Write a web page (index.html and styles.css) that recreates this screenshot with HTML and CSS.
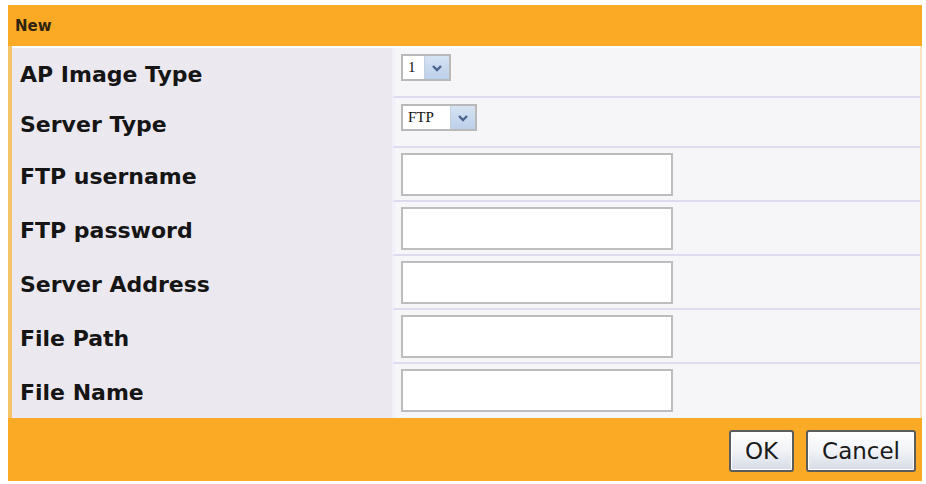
FILE: index.html
```html
<!DOCTYPE html>
<html lang="en">
<head>
    <meta charset="UTF-8">
    <title>New</title>
    <link rel="stylesheet" href="styles.css">
</head>
<body>
    <div class="dialog">
        <div class="dialog-head">New</div>
        <div class="dialog-body">
            <div class="row row-short">
                <div class="label">AP Image Type</div>
                <div class="value">
                    <span class="select select-small">
                        <span class="select-text">1</span>
                        <span class="select-btn">
                            <svg width="12" height="8" viewBox="0 0 12 8"><path d="M2 2 L6 6 L10 2" fill="none" stroke="#4c6590" stroke-width="2.4"/></svg>
                        </span>
                    </span>
                </div>
            </div>
            <div class="row row-short">
                <div class="label">Server Type</div>
                <div class="value">
                    <span class="select select-wide">
                        <span class="select-text">FTP</span>
                        <span class="select-btn">
                            <svg width="12" height="8" viewBox="0 0 12 8"><path d="M2 2 L6 6 L10 2" fill="none" stroke="#4c6590" stroke-width="2.4"/></svg>
                        </span>
                    </span>
                </div>
            </div>
            <div class="row">
                <div class="label">FTP username</div>
                <div class="value"><input type="text" class="field"></div>
            </div>
            <div class="row">
                <div class="label">FTP password</div>
                <div class="value"><input type="password" class="field"></div>
            </div>
            <div class="row">
                <div class="label">Server Address</div>
                <div class="value"><input type="text" class="field"></div>
            </div>
            <div class="row">
                <div class="label">File Path</div>
                <div class="value"><input type="text" class="field"></div>
            </div>
            <div class="row row-last">
                <div class="label">File Name</div>
                <div class="value"><input type="text" class="field"></div>
            </div>
        </div>
        <div class="dialog-foot">
            <button class="btn">OK</button>
            <button class="btn">Cancel</button>
        </div>
    </div>
</body>
</html>
```

FILE: styles.css
```css
body {
    margin: 0;
    background: #ffffff;
    font-family: "DejaVu Sans", Verdana, sans-serif;
}
.dialog {
    margin: 5px 0 0 8px;
    width: 914px;
}
.dialog-head {
    height: 41px;
    background: #fbaa25;
    padding-left: 7px;
    font-size: 15px;
    font-weight: bold;
    color: #2e2410;
    display: flex;
    align-items: center;
}
.dialog-body {
    border-left: 4px solid #f6c26a;
    border-right: 2px solid #f7e3bd;
    padding-top: 2px;
}
.row {
    display: grid;
    grid-template-columns: 380px 1fr;
    height: 54px;
}
.row-short {
    height: 50px;
}
.label {
    background: #ece8ef;
    padding: 3px 0 0 8px;
    display: flex;
    align-items: center;
    font-size: 22px;
    font-weight: bold;
    color: #151515;
}
.value {
    background: #f6f6f8;
    border-left: 3px solid #f1f0f9;
    border-bottom: 2px solid #dedbf0;
    padding: 5px 0 0 6px;
}
.row-last .value {
    border-bottom: none;
}
.select {
    display: inline-flex;
    height: 27px;
    border: 2px solid #b9b9b9;
    background: #ffffff;
    box-sizing: border-box;
    margin-top: 1px;
}
.select-small {
    width: 50px;
}
.select-wide {
    width: 76px;
}
.select-text {
    flex: 1;
    font-family: "Liberation Serif", "Times New Roman", serif;
    font-size: 15px;
    color: #111;
    padding-left: 5px;
    line-height: 23px;
}
.select-btn {
    width: 24px;
    background: linear-gradient(#d6e3f3, #bcd0ea);
    border-left: 1px solid #c4cfdd;
    display: flex;
    align-items: center;
    justify-content: center;
}
.field {
    width: 272px;
    height: 43px;
    box-sizing: border-box;
    border: 2px solid #bdbdbd;
    background: #ffffff;
    margin: 0;
}
.dialog-foot {
    height: 63px;
    background: #fbaa25;
    display: flex;
    justify-content: flex-end;
    align-items: flex-start;
    gap: 12px;
    padding: 12px 6px 0 0;
    box-sizing: border-box;
}
.btn {
    height: 42px;
    padding: 0 14px;
    font-family: "DejaVu Sans", Verdana, sans-serif;
    font-size: 23px;
    color: #1a1a1a;
    background: linear-gradient(#ffffff, #f1f3f7 50%, #d5dbe6);
    border: 2px solid #5c5c5c;
    border-radius: 3px;
    box-shadow: inset 0 0 0 1px #ffffff;
    cursor: pointer;
}
```
